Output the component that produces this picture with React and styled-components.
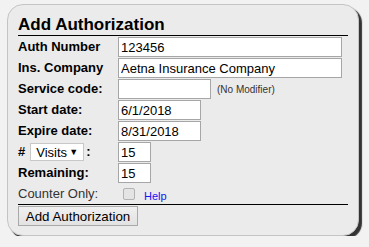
import React from "react";
import styled, { createGlobalStyle } from "styled-components";

const GlobalStyle = createGlobalStyle`
  body {
    margin: 0;
    background: #f2f2f2;
    font-family: "Liberation Sans", Arial, sans-serif;
  }
`;

const Panel = styled.div`
  box-sizing: border-box;
  width: 352px;
  margin: 4px 0 0 7px;
  padding: 9px 10px 9px 10px;
  background: #ebebeb;
  border: 1px solid #c4c4c4;
  border-radius: 16px;
  box-shadow: 3px 3px 1px #333;
`;

const Title = styled.div`
  font-size: 17px;
  font-weight: bold;
  line-height: 21px;
  color: #000;
  border-bottom: 1px solid #000;
`;

const Row = styled.div`
  display: grid;
  grid-template-columns: 100px 1fr;
  height: 21px;
`;

const Label = styled.div`
  display: flex;
  align-items: center;
  padding-top: 1px;
  font-size: 13px;
  font-weight: ${(p) => (p.$plain ? "normal" : "bold")};
  color: ${(p) => (p.$plain ? "#333" : "#000")};
  line-height: 20px;
  white-space: nowrap;
`;

const Field = styled.div`
  display: flex;
  align-items: center;
  padding-top: 1px;
  height: 20px;
`;

const TextInput = styled.input`
  box-sizing: border-box;
  width: ${(p) => p.$w}px;
  height: 20px;
  margin: 0;
  padding: 0 2px;
  border: 1px solid #a6a6a6;
  background: #fff;
  font-family: "Liberation Sans", Arial, sans-serif;
  font-size: 13px;
  color: #000;
  outline: none;
`;

const Note = styled.span`
  margin-left: 6px;
  font-size: 10px;
  color: #333;
`;

const SelectWrap = styled.span`
  position: relative;
  display: inline-flex;
  margin: 0 2px 0 5px;
`;

const Select = styled.select`
  box-sizing: border-box;
  appearance: none;
  width: 54px;
  height: 18px;
  margin: 0;
  padding: 0 0 0 5px;
  border: 1px solid #c8c8c8;
  border-radius: 0;
  background: #fff;
  font-family: "Liberation Sans", Arial, sans-serif;
  font-size: 13px;
  font-weight: normal;
  color: #000;
`;

const Arrow = styled.span`
  position: absolute;
  right: 6px;
  top: 3px;
  font-size: 9px;
  line-height: 12px;
  color: #000;
  pointer-events: none;
`;

const Check = styled.input`
  appearance: none;
  box-sizing: border-box;
  width: 12px;
  height: 12px;
  margin: 0 0 0 5px;
  border: 1px solid #b3b3b3;
  border-radius: 2px;
  background: #e4e4e4;
`;

const HelpLink = styled.a`
  margin: 4px 0 0 9px;
  font-size: 11px;
  color: #1515f5;
  text-decoration: none;
`;

const Divider = styled.div`
  height: 1px;
  background: #000;
`;

const Button = styled.button`
  box-sizing: border-box;
  width: 120px;
  height: 20px;
  margin-top: 1px;
  padding: 0 6px;
  border: 1px solid #a9a9a9;
  border-radius: 0;
  background: linear-gradient(#f0f0f0, #e2e2e2);
  font-family: "Liberation Sans", Arial, sans-serif;
  font-size: 13.33px;
  color: #000;
`;

const FIELDS = [
  { label: "Auth Number", value: "123456", w: 224 },
  { label: "Ins. Company", value: "Aetna Insurance Company", w: 224 },
  { label: "Service code:", value: "", w: 93, note: "(No Modifier)" },
  { label: "Start date:", value: "6/1/2018", w: 83 },
  { label: "Expire date:", value: "8/31/2018", w: 83 },
];

export default function App() {
  return (
    <>
      <GlobalStyle />
      <Panel>
        <Title>Add Authorization</Title>
        {FIELDS.map((f) => (
          <Row key={f.label}>
            <Label>{f.label}</Label>
            <Field>
              <TextInput $w={f.w} defaultValue={f.value} />
              {f.note && <Note>{f.note}</Note>}
            </Field>
          </Row>
        ))}
        <Row>
          <Label>
            #
            <SelectWrap>
              <Select defaultValue="Visits">
                <option>Visits</option>
                <option>Units</option>
              </Select>
              <Arrow>▼</Arrow>
            </SelectWrap>
            :
          </Label>
          <Field>
            <TextInput $w={33} defaultValue="15" />
          </Field>
        </Row>
        <Row>
          <Label>Remaining:</Label>
          <Field>
            <TextInput $w={33} defaultValue="15" />
          </Field>
        </Row>
        <Row>
          <Label $plain>Counter Only:</Label>
          <Field>
            <Check type="checkbox" disabled />
            <HelpLink href="#">Help</HelpLink>
          </Field>
        </Row>
        <Divider />
        <Button>Add Authorization</Button>
      </Panel>
    </>
  );
}
